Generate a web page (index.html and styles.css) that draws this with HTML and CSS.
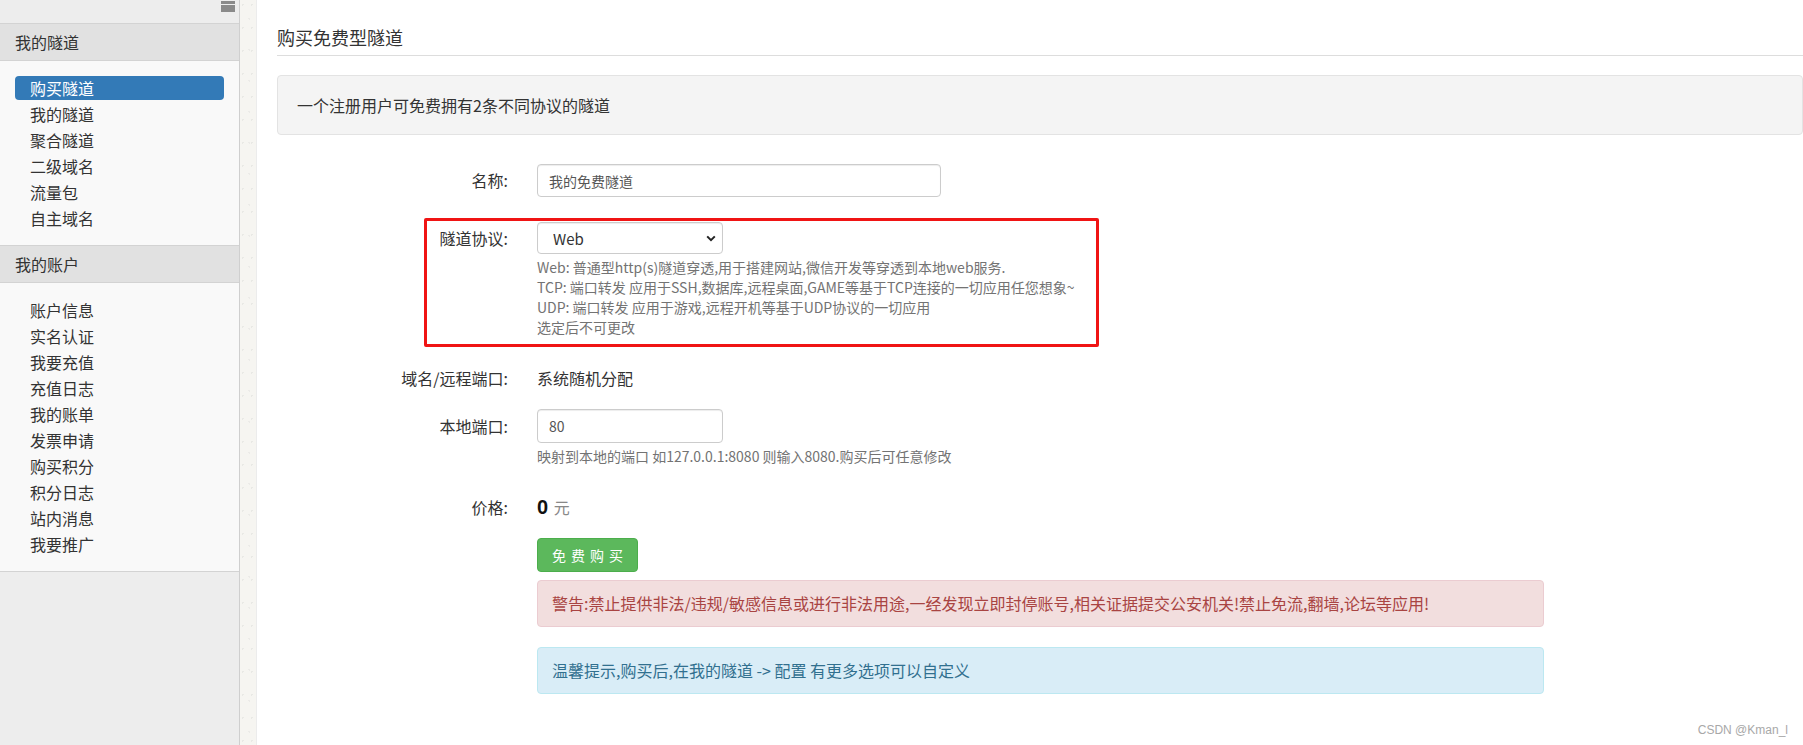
FILE: index.html
```html
<!DOCTYPE html>
<html lang="zh-CN">
<head>
<meta charset="utf-8">
<title>购买免费型隧道</title>
<link rel="stylesheet" href="styles.css">
</head>
<body>
<div class="page">
  <aside class="sidebar">
    <div class="side-top">
      <svg class="collapse-icon" width="14" height="11" viewBox="0 0 14 11">
        <rect x="0" y="0" width="14" height="3" fill="#8a8a8a"/>
        <rect x="0" y="4" width="14" height="7" fill="#8a8a8a"/>
      </svg>
    </div>
    <div class="nav-head">我的隧道</div>
    <ul class="nav-list">
      <li class="active">购买隧道</li>
      <li>我的隧道</li>
      <li>聚合隧道</li>
      <li>二级域名</li>
      <li>流量包</li>
      <li>自主域名</li>
    </ul>
    <div class="nav-head">我的账户</div>
    <ul class="nav-list nav-last">
      <li>账户信息</li>
      <li>实名认证</li>
      <li>我要充值</li>
      <li>充值日志</li>
      <li>我的账单</li>
      <li>发票申请</li>
      <li>购买积分</li>
      <li>积分日志</li>
      <li>站内消息</li>
      <li>我要推广</li>
    </ul>
  </aside>
  <div class="strip"></div>
  <main class="main">
    <h2 class="page-title">购买免费型隧道</h2>
    <div class="well">一个注册用户可免费拥有2条不同协议的隧道</div>
    <form class="form">
      <div class="row row-name">
        <label class="lbl">名称:</label>
        <div class="ctl"><input class="input input-name" type="text" value="我的免费隧道"></div>
      </div>
      <div class="row row-proto">
        <label class="lbl lbl-select">隧道协议:</label>
        <div class="ctl">
          <div class="select-wrap">
            <select class="select"><option>Web</option><option>TCP</option><option>UDP</option></select>
            <svg class="chev" width="10" height="7" viewBox="0 0 10 7"><path d="M1.2 1.4 L5 5.2 L8.8 1.4" fill="none" stroke="#222" stroke-width="2"/></svg>
          </div>
          <div class="help">
            <div>Web: 普通型http(s)隧道穿透,用于搭建网站,微信开发等穿透到本地web服务.</div>
            <div>TCP: 端口转发 应用于SSH,数据库,远程桌面,GAME等基于TCP连接的一切应用任您想象~</div>
            <div>UDP: 端口转发 应用于游戏,远程开机等基于UDP协议的一切应用</div>
            <div>选定后不可更改</div>
          </div>
        </div>
      </div>
      <div class="row row-domain">
        <label class="lbl lbl-static">域名/远程端口:</label>
        <div class="ctl static">系统随机分配</div>
      </div>
      <div class="row row-port">
        <label class="lbl lbl-port">本地端口:</label>
        <div class="ctl">
          <input class="input input-port" type="text" value="80">
          <div class="help">映射到本地的端口 如127.0.0.1:8080 则输入8080.购买后可任意修改</div>
        </div>
      </div>
      <div class="row row-price">
        <label class="lbl lbl-static">价格:</label>
        <div class="ctl static"><span class="price">0</span> <span class="yuan">元</span></div>
      </div>
      <div class="offset row-btn">
        <button class="btn" type="button">免费购买</button>
      </div>
      <div class="offset alert alert-danger">警告:禁止提供非法/违规/敏感信息或进行非法用途,一经发现立即封停账号,相关证据提交公安机关!禁止免流,翻墙,论坛等应用!</div>
      <div class="offset alert alert-info">温馨提示,购买后,在我的隧道 -&gt; 配置 有更多选项可以自定义</div>
    </form>
  </main>
  <div class="red-box"></div>
  <div class="watermark">CSDN @Kman_l</div>
</div>
</body>
</html>
```

FILE: styles.css
```css
* { box-sizing: border-box; }

html, body {
  margin: 0;
  padding: 0;
  height: 745px;
  overflow: hidden;
  background: #fff;
}

body {
  font-family: "Noto Sans CJK SC", "Noto Sans", sans-serif;
  font-size: 16px;
  color: #333;
}

.page {
  position: relative;
  display: flex;
  height: 745px;
}

/* ---------- sidebar ---------- */
.sidebar {
  width: 240px;
  flex: none;
  background: #ededed;
  border-right: 1px solid #cfcfcf;
}

.side-top {
  height: 23px;
  display: flex;
  justify-content: flex-end;
  padding: 1px 4px 0 0;
}

.collapse-icon { display: block; }

.nav-head {
  height: 38px;
  border-top: 1px solid #d3d3d3;
  border-bottom: 1px solid #d3d3d3;
  background: #e1e1e1;
  padding-left: 15px;
  line-height: 36px;
  font-size: 16px;
  color: #333;
}

.nav-list {
  list-style: none;
  margin: 0;
  padding: 15px 15px;
  background: #f9f9f9;
  display: flex;
  flex-direction: column;
  gap: 2px;
}

.nav-list li {
  height: 24px;
  line-height: 24px;
  padding-left: 15px;
  font-size: 16px;
  color: #333;
  border-radius: 4px;
}

.nav-list li.active {
  background: #337ab7;
  color: #fff;
}

.nav-last {
  border-bottom: 1px solid #d3d3d3;
}

/* ---------- textured strip ---------- */
.strip {
  width: 17px;
  flex: none;
  background:
    radial-gradient(circle at 30% 20%, rgba(0,0,0,0.05) 0 1px, transparent 1px) 0 0 / 9px 23px,
    radial-gradient(circle at 70% 60%, rgba(0,0,0,0.04) 0 1px, transparent 1px) 0 0 / 13px 31px,
    #f6f5f1;
  border-right: 1px solid #ececec;
}

/* ---------- main ---------- */
.main {
  flex: 1;
  padding: 0 0 0 20px;
}

.page-title {
  margin: 0;
  padding: 24px 0 5px;
  font-size: 18px;
  font-weight: normal;
  line-height: 26px;
  color: #333;
  border-bottom: 1px solid #dddddd;
}

.well {
  margin-top: 19px;
  height: 60px;
  border: 1px solid #e3e3e3;
  border-radius: 4px;
  background: #f4f4f4;
  padding: 0 19px;
  line-height: 58px;
  font-size: 16px;
  color: #333;
}

.form { margin: 0; }

.row {
  display: grid;
  grid-template-columns: 231px 1007px;
  column-gap: 29px;
  align-items: start;
}

.lbl {
  text-align: right;
  font-size: 16px;
  line-height: 33px;
  color: #333;
}

.lbl-select { line-height: 32px; }
.lbl-static { line-height: 34px; }
.lbl-port { line-height: 34px; }

.row-name { margin-top: 29px; }
.row-proto { margin-top: 25px; }
.row-domain { margin-top: 24px; }
.row-port { margin-top: 14px; }
.row-price { margin-top: 24px; }

.input {
  display: block;
  height: 33px;
  border: 1px solid #cccccc;
  border-radius: 4px;
  box-shadow: inset 0 1px 1px rgba(0,0,0,0.075);
  padding: 0 11px;
  font-family: "Noto Sans CJK SC", "Noto Sans", sans-serif;
  font-size: 14px;
  color: #555;
  background: #fff;
  outline: none;
}

.input-name { width: 404px; }
.input-port { width: 186px; height: 34px; }

.select-wrap {
  position: relative;
  width: 186px;
  height: 32px;
}

.select {
  appearance: none;
  -webkit-appearance: none;
  display: block;
  width: 186px;
  height: 32px;
  border: 1px solid #cccccc;
  border-radius: 4px;
  box-shadow: inset 0 1px 1px rgba(0,0,0,0.075);
  background: #fff;
  padding: 0 0 0 15px;
  font-family: "Noto Sans CJK SC", "Noto Sans", sans-serif;
  font-size: 15px;
  color: #333;
  outline: none;
}

.chev {
  position: absolute;
  right: 7px;
  top: 13px;
  pointer-events: none;
}

.help {
  margin-top: 3px;
  font-size: 14px;
  line-height: 20px;
  color: #737373;
}

.static {
  font-size: 16px;
  line-height: 34px;
  color: #333;
}

.price {
  font-family: "Liberation Sans", "Noto Sans", sans-serif;
  font-size: 20px;
  font-weight: bold;
  color: #111;
}

.yuan {
  font-size: 16px;
  color: #888;
  margin-left: 2px;
}

.offset {
  margin-left: 260px;
  width: 1007px;
}

.row-btn { margin-top: 14px; }

.btn {
  display: block;
  height: 34px;
  width: 101px;
  padding: 0 0 0 5px;
  border: 1px solid #4cae4c;
  border-radius: 4px;
  background: #5cb85c;
  color: #fff;
  font-family: "Noto Sans CJK SC", "Noto Sans", sans-serif;
  font-size: 14px;
  letter-spacing: 5px;
  line-height: 32px;
  text-align: center;
}

.alert {
  height: 47px;
  border: 1px solid transparent;
  border-radius: 4px;
  padding: 0 14px;
  font-size: 16px;
  line-height: 45px;
}

.alert-danger {
  margin-top: 8px;
  background: #f2dede;
  border-color: #ebccd1;
  color: #a94442;
}

.alert-info {
  margin-top: 20px;
  background: #d9edf7;
  border-color: #bce8f1;
  color: #31708f;
}

/* ---------- overlays ---------- */
.red-box {
  position: absolute;
  left: 424px;
  top: 218px;
  width: 675px;
  height: 129px;
  border: 3px solid #f01414;
  border-radius: 2px;
  pointer-events: none;
}

.watermark {
  position: absolute;
  right: 15px;
  bottom: 8px;
  font-family: "Liberation Sans", sans-serif;
  font-size: 12px;
  line-height: 14px;
  color: #a8a8a8;
}
```
